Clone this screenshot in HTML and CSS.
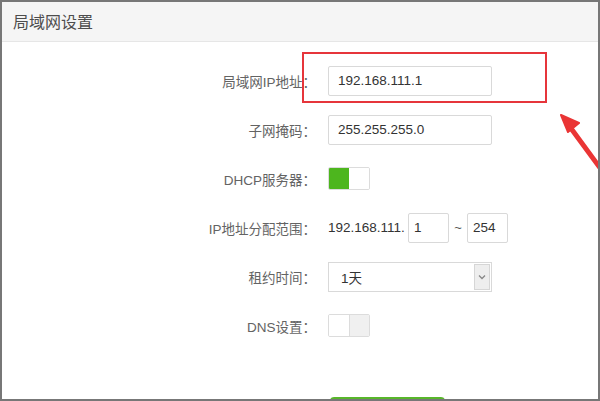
FILE: index.html
```html
<!DOCTYPE html>
<html lang="zh-CN">
<head>
<meta charset="utf-8">
<title>局域网设置</title>
<link rel="stylesheet" href="styles.css">
</head>
<body>
<div class="frame">
  <div class="header">局域网设置</div>
  <div class="form">
    <div class="row">
      <label class="label">局域网IP地址：</label>
      <div class="input wide">192.168.111.1</div>
    </div>
    <div class="row">
      <label class="label">子网掩码：</label>
      <div class="input wide">255.255.255.0</div>
    </div>
    <div class="row">
      <label class="label">DHCP服务器：</label>
      <div class="switch on"><span class="knob"></span><span class="rest"></span></div>
    </div>
    <div class="row">
      <label class="label">IP地址分配范围：</label>
      <span class="prefix">192.168.111.</span>
      <div class="input small">1</div>
      <span class="tilde">~</span>
      <div class="input small">254</div>
    </div>
    <div class="row">
      <label class="label">租约时间：</label>
      <div class="select">
        <span class="select-text">1天</span>
        <span class="select-arrow">
          <svg width="8" height="6" viewBox="0 0 8 6"><path d="M1 1.5 L4 4.5 L7 1.5" fill="none" stroke="#888" stroke-width="1.3"/></svg>
        </span>
      </div>
    </div>
    <div class="row">
      <label class="label">DNS设置：</label>
      <div class="switch off"><span class="knob"></span><span class="rest"></span></div>
    </div>
    <div class="actions">
      <div class="button"></div>
    </div>
  </div>
  <div class="highlight"></div>
  <svg class="pointer" width="60" height="70" viewBox="0 0 60 70">
    <path d="M46 62 L10 13" stroke="#ea3535" stroke-width="5" stroke-linecap="round" fill="none"/>
    <path d="M1 1 L19 9 L8 18 Z" fill="#ea3535" stroke="#ea3535" stroke-width="2" stroke-linejoin="round"/>
  </svg>
</div>
</body>
</html>
```
FILE: styles.css
```css
html, body {
  margin: 0;
  padding: 0;
  background: #ffffff;
}
.frame {
  position: relative;
  width: 600px;
  height: 401px;
  box-sizing: border-box;
  border: 2px solid #777777;
  overflow: hidden;
  font-family: "Liberation Sans", "Noto Sans CJK SC", sans-serif;
  color: #666666;
}
.header {
  height: 39px;
  line-height: 38px;
  background: #f5f5f5;
  border-bottom: 1px solid #e6e6e6;
  padding-left: 11px;
  font-family: "Noto Sans CJK SC", sans-serif;
  font-size: 16px;
  color: #4d4d4d;
}
.form {
  padding-top: 14px;
  display: flex;
  flex-direction: column;
}
.row {
  height: 49px;
  display: flex;
  align-items: center;
}
.label {
  width: 314px;
  margin-right: 12px;
  text-align: right;
  font-size: 13.5px;
  color: #636363;
  flex-shrink: 0;
}
.input {
  box-sizing: border-box;
  height: 30px;
  border: 1px solid #d9d9d9;
  border-radius: 2px;
  display: flex;
  align-items: center;
  font-size: 13.5px;
  color: #333333;
}
.wide {
  width: 164px;
  padding-left: 9px;
}
.small {
  width: 41px;
  padding-left: 5px;
}
.prefix {
  font-size: 13.5px;
  color: #333333;
  width: 80px;
}
.tilde {
  width: 18px;
  text-align: center;
  font-size: 13px;
  color: #555555;
}
.switch {
  width: 42px;
  height: 23px;
  box-sizing: border-box;
  border: 1px solid #dcdcdc;
  border-radius: 2px;
  display: flex;
  overflow: hidden;
}
.switch .knob, .switch .rest {
  flex: 1;
}
.switch.on .knob {
  background: #4db61e;
}
.switch.on .rest {
  background: #ffffff;
}
.switch.off .knob {
  background: #ffffff;
  border-right: 1px solid #dcdcdc;
}
.switch.off .rest {
  background: #f0f0f0;
}
.select {
  box-sizing: border-box;
  width: 164px;
  height: 30px;
  border: 1px solid #d9d9d9;
  display: flex;
  align-items: center;
  justify-content: space-between;
  padding: 0 1px 0 12px;
}
.select-text {
  font-size: 13.5px;
  color: #333333;
  font-family: "Liberation Sans", "Noto Sans CJK SC", sans-serif;
}
.select-arrow {
  width: 16px;
  height: 26px;
  box-sizing: border-box;
  background: #eeeeee;
  border: 1px solid #d6d6d6;
  display: flex;
  align-items: center;
  justify-content: center;
}
.actions {
  margin-top: 47px;
  padding-left: 328px;
}
.button {
  width: 115px;
  height: 32px;
  background: #58b62a;
  border-radius: 4px;
}
.highlight {
  position: absolute;
  left: 300px;
  top: 50px;
  width: 245px;
  height: 51px;
  box-sizing: border-box;
  border: 2.5px solid #e6353b;
}
.pointer {
  position: absolute;
  left: 558px;
  top: 112px;
}
```
